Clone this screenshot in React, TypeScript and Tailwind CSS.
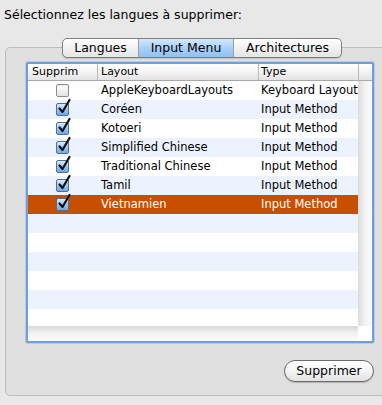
const rows = [
  { on: false, layout: "AppleKeyboardLayouts", type: "Keyboard Layout" },
  { on: true, layout: "Coréen", type: "Input Method" },
  { on: true, layout: "Kotoeri", type: "Input Method" },
  { on: true, layout: "Simplified Chinese", type: "Input Method" },
  { on: true, layout: "Traditional Chinese", type: "Input Method" },
  { on: true, layout: "Tamil", type: "Input Method" },
  { on: true, layout: "Vietnamien", type: "Input Method", selected: true },
];

const FONT = "font-['Lucida_Grande','DejaVu_Sans',sans-serif]";

function Checkbox({ on }: { on: boolean }) {
  if (!on) {
    return (
      <div className="h-[13px] w-[13px] rounded-[2px] border border-[#8e8e8e] bg-gradient-to-b from-[#ffffff] to-[#e4e4e4] shadow-[inset_0_1px_1px_rgba(0,0,0,0.08)]" />
    );
  }
  return (
    <div className="relative h-[13px] w-[13px] rounded-[2px] border border-[#4f6f99] bg-gradient-to-b from-[#dcebfd] via-[#9cc6f3] to-[#6ea8ea]">
      <svg
        className="absolute left-[1px] top-[-5px] overflow-visible"
        width="14"
        height="16"
        viewBox="0 0 14 16"
      >
        <path
          d="M1.5 9.5 L4.5 13 L11.5 1"
          fill="none"
          stroke="#111"
          strokeWidth="2.2"
          strokeLinecap="round"
          strokeLinejoin="round"
        />
      </svg>
    </div>
  );
}

function Tabs() {
  const tabs = [
    { label: "Langues", w: "w-[75px]" },
    { label: "Input Menu", w: "w-[95px]", active: true },
    { label: "Architectures", w: "w-[108px]" },
  ];
  return (
    <div className="relative z-10 ml-[56px] -mt-[10px] flex h-[20px] w-fit overflow-hidden rounded-[5px] border border-[#7f7f7f] bg-gradient-to-b from-[#ffffff] to-[#e4e4e4] shadow-[0_1px_1px_rgba(0,0,0,0.15)]">
      {tabs.map((t, i) => (
        <div
          key={t.label}
          className={`${t.w} flex items-center justify-center text-[12.5px] leading-none text-black ${
            i > 0 ? "border-l border-[#9b9b9b]" : ""
          } ${t.active ? "bg-gradient-to-b from-[#d5e8fc] via-[#a9d0f7] to-[#8fc1f4]" : ""}`}
        >
          {t.label}
        </div>
      ))}
    </div>
  );
}

export default function App() {
  const empty = Array.from({ length: 6 });

  return (
    <div className={`${FONT} relative h-[405px] w-[382px] overflow-hidden bg-[#e8e8e8] text-black`}>
      <div className="pl-[4px] pt-[7px] text-[12.5px] leading-[16px]">
        Sélectionnez les langues à supprimer:
      </div>

      <div className="ml-[5px] mt-[24px] h-[349px] w-[400px] rounded-[5px] border border-[#bdbdbd] bg-[#e0e0e0]">
        <Tabs />

        {/* table */}
        <div className="ml-[20px] mt-[4px] h-[281px] w-[348px] rounded-[2px] border-2 border-[#729ed8] shadow-[0_0_0_1px_#b4cbeb] bg-white overflow-hidden">
          <div className="flex h-[17px] border-b border-[#a8a8a8] bg-gradient-to-b from-[#ffffff] via-[#f3f3f3] to-[#e3e3e3] text-[11px] leading-[16px]">
            <div className="w-[69px] pl-[4px]">Supprim</div>
            <div className="w-[161px] border-l border-[#b9b9b9] pl-[3px]">Layout</div>
            <div className="w-[100px] border-l border-[#b9b9b9] pl-[2px]">Type</div>
            <div className="flex-1 border-l border-[#b9b9b9]" />
          </div>

          <div className="flex h-[260px]">
            <div className="flex w-[330px] flex-col">
              <div className="h-[245px] overflow-hidden">
                {rows.map((r, i) => (
                  <div
                    key={r.layout}
                    className={`flex h-[19px] items-center text-[11.5px] ${
                      r.selected
                        ? "bg-[#c94f00] text-white"
                        : i % 2 === 1
                          ? "bg-[#edf3fe]"
                          : "bg-white"
                    }`}
                  >
                    <div className="flex w-[69px] justify-center">
                      <Checkbox on={r.on} />
                    </div>
                    <div className="w-[161px] pl-[4px]">{r.layout}</div>
                    <div className="w-[100px] pl-[3px] whitespace-nowrap">{r.type}</div>
                  </div>
                ))}
                {empty.map((_, i) => (
                  <div
                    key={i}
                    className={`h-[19px] ${(i + rows.length) % 2 === 1 ? "bg-[#edf3fe]" : "bg-white"}`}
                  />
                ))}
              </div>
              <div className="h-[15px] bg-gradient-to-b from-[#d9d9d9] via-[#f3f3f3] to-[#fbfbfb]" />
            </div>
            <div className="flex flex-1 flex-col">
              <div className="h-[245px] bg-gradient-to-r from-[#dcdcdc] via-[#f3f3f3] to-[#fbfbfb]" />
              <div className="flex-1 bg-white" />
            </div>
          </div>
        </div>

        <div className="ml-[20px] mt-[17px] flex w-[348px] justify-end">
          <button className="flex h-[22px] w-[90px] items-center justify-center rounded-full border border-[#6a6a6a] bg-gradient-to-b from-[#ffffff] via-[#f4f4f4] to-[#e2e2e2] text-[12.5px] leading-none shadow-[0_1px_1px_rgba(0,0,0,0.2)]">
            Supprimer
          </button>
        </div>
      </div>
    </div>
  );
}
